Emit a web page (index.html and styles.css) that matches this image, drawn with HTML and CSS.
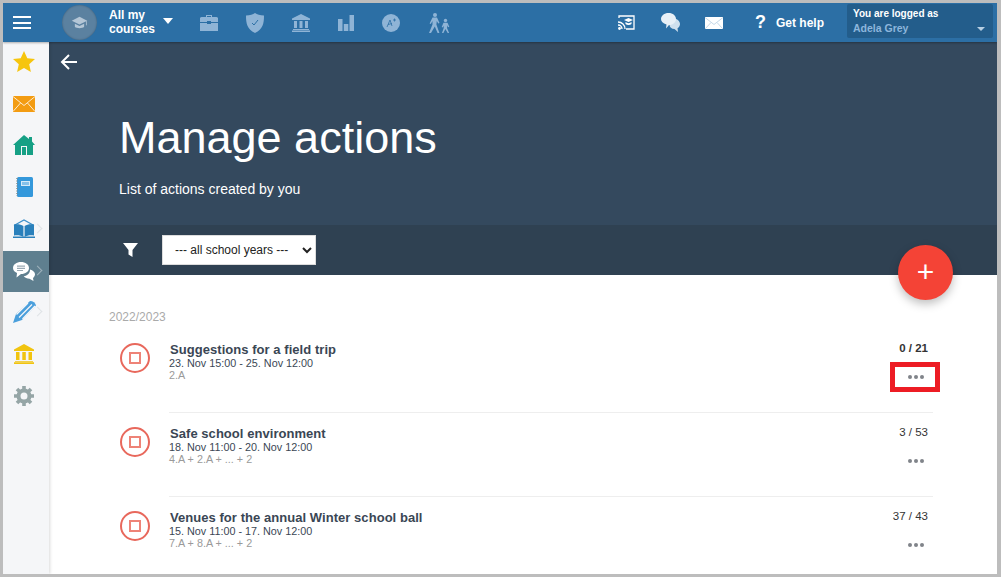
FILE: index.html
```html
<!DOCTYPE html>
<html lang="en">
<head>
<meta charset="utf-8">
<title>Manage actions</title>
<link rel="stylesheet" href="styles.css">
</head>
<body>
<div class="frame">
  <header class="topbar">
    <button class="burger" aria-label="Menu"><span></span><span></span><span></span></button>
    <div class="avatar">
      <svg width="17" height="14" viewBox="0 0 22 18"><path fill="#b4c6d6" d="M11 1 1 6l10 5 10-5z"/><path fill="#b4c6d6" d="M5 10v4c2 2.500 10 2.500 12 0v-4l-6 3z"/><path stroke="#b4c6d6" d="M20 6.500V12"/></svg>
    </div>
    <div class="courses">All my<br>courses</div>
    <span class="caret"></span>
    <nav class="topnav">
      <svg width="18" height="16" viewBox="0 0 18 16"><path fill="#8fb4d6" d="M6 0h6v2h4a2 2 0 0 1 2 1v4H11V6H7v1H0V3a2 2 0 0 1 2-1h4zm1 1v1h4V1zM0 8h7v1h4V8h7v8H0z"/></svg>
      <svg width="18" height="20" viewBox="0 0 18 20"><path fill="#8fb4d6" d="M9 0c2 1.500 5 2.500 9 2.500 0 8-1 13.500-9 17.500C1 16 0 10.500 0 2.500 4 2.500 7 1.500 9 0z"/><path fill="none" stroke="#2c6fa5" d="m6 10 2 2 4-5"/></svg>
      <svg width="18" height="18" viewBox="0 0 18 18"><path fill="#8fb4d6" d="M9 0l9 4.500V6H0V4.500zM2 7h3v7H2zm5.500 0h3v7h-3zM13 7h3v7h-3zM1 15h16v1H1zm-1 1.500h18V18H0z"/></svg>
      <svg width="16" height="16" viewBox="0 0 16 16"><path fill="#8fb4d6" d="M0 4h4.500v12H0zm5.800 5h4.500v7H5.800zm5.700-9H16v16h-4.500z"/></svg>
      <svg width="18" height="18" viewBox="0 0 18 18"><circle cx="9" cy="9" r="9" fill="#8fb4d6"/><path fill="none" stroke="#2c6fa5" stroke-width=".8" d="m5 13 3-7 2 6M6 10.500l4-1M11 6h3M12.500 4.500v3"/></svg>
      <svg width="22" height="20" viewBox="0 0 22 20"><g fill="#8fb4d6"><circle cx="7" cy="2" r="2"/><circle cx="17.500" cy="7.500" r="1.700"/><path d="M4.500 4.500h4.500l2.500 5.500-1.200.600L8.800 8l-.4 3.500 3 8.500H9.600L6.800 13.500 3 20H1l3.500-8.500V8L2.800 11l-1.200-.6z"/><path d="M15.500 9.800h4l1.800 4-1.200.5-1-2v3l2 4.700h-1.400L17.400 16l-2 4H14l1.700-5v-2.200l-1 1.700-1-.6z"/></g></svg>
    </nav>
    <div class="topright">
      <svg width="17" height="15" viewBox="0 0 17 15"><path fill="none" stroke="#fff" stroke-width="1.300" d="M1 3V1h15v13H8"/><path fill="#fff" d="M6 5l4.500-2L15 5l-4.500 2zM7.500 7c1.500 1.500 4.500 1.500 6 0v2c-1.500 1.200-4.500 1.200-6 0z"/><path fill="none" stroke="#fff" stroke-width="1.300" d="M0 7c4 0 7 3 7 7M0 10c2.500 0 4 1.800 4 4"/><circle cx="1.500" cy="13.500" r="1.400" fill="#fff"/></svg>
      <svg width="19" height="19" viewBox="0 0 19 19"><path fill="#cfe0ee" d="M13 5.500c3 .3 6 2.500 6 5.500 0 2-1 3.300-2.500 4.300l.500 3.700-3.500-3c-3 0-5-2-5-4z"/><path fill="#e8f0f7" d="M7.500 0C12 0 15 2.700 15 6s-3 6-7 6l-3 3.500.5-4C2 10.500 0 8.500 0 6c0-3.300 3.300-6 7.500-6z"/></svg>
      <svg width="18" height="12" viewBox="0 0 18 12"><path fill="#fff" d="M0 0h18v12H0z"/><path fill="none" stroke="#c5d8e8" d="m0 .500 9 7 9-7M0 12l6-6.500M18 12l-6-6.500"/></svg>
      <a class="help"><span class="help-mark">?</span>Get help</a>
      <div class="user">
        <div class="user-label">You are logged as</div>
        <div class="user-name">Adela Grey</div>
        <span class="user-caret"></span>
      </div>
    </div>
  </header>

  <div class="body-row">
    <aside class="sidebar">
      <div class="side-item"><svg width="22" height="21" viewBox="0 0 22 21"><path fill="#f6c50e" d="m11 0 3.300 7.200 7.700.800-5.800 5.200 1.700 7.800L11 17l-6.900 4 1.700-7.800L0 8l7.700-.8z"/></svg></div>
      <div class="side-item"><svg width="22" height="16" viewBox="0 0 22 16"><path fill="#f39c12" d="M0 0h22v16H0z"/><path fill="none" stroke="#fdebd0" d="m0 .500 11 9 11-9M0 15.500 7.500 7M22 15.500 14.500 7"/></svg></div>
      <div class="side-item"><svg width="22" height="20" viewBox="0 0 22 20"><path fill="#16a085" d="M11 0l5 4V2h3v4.500L22 10h-2v10H2V10H0z"/><path fill="#f5f6f8" d="M8 11h6v9h-1v-8H9v8H8z"/></svg></div>
      <div class="side-item"><svg width="17" height="20" viewBox="0 0 17 20"><rect x="1" width="16" height="20" rx="1.500" fill="#3498db"/><path fill="#d6eaf8" d="M5 4h9v5H5z"/><path fill="#3498db" d="M6 5.500h7v1H6zm0 1.700h7v.600H6z"/><path stroke="#7f8c8d" stroke-dasharray="1 1.500" stroke-width="1.500" d="M1 1v18"/></svg></div>
      <div class="side-item side-more"><svg width="22" height="20" viewBox="0 0 22 20"><path fill="none" stroke="#3d8fc9" stroke-width="1.200" d="M1 6.500 11 1l10 5.500"/><path fill="#2a80bb" d="M1 5.500c4-.5 7 0 9.400 1.500v11C8 16.500 5 16 1 16.500zm20 0c-4-.5-7 0-9.400 1.500v11c2.400-1.500 5.400-2 9.400-1.500z"/><path fill="#2a80bb" d="M0 17.500h22V19H0z"/></svg><span class="chev"></span></div>
      <div class="side-item side-more active"><svg width="22" height="19" viewBox="0 0 22 19"><path fill="#fff" d="M8 0c4.400 0 8 2.500 8 6s-3.600 6-8 6l-4.500 3.500L4 11C1.500 10 0 8.300 0 6c0-3.500 3.600-6 8-6z"/><path fill="#9aa9b3" d="M4 3.500h8v1.200H4zm0 2.300h8V7H4zm0 2.300h6v1H4z"/><path fill="#fff" d="M17 7.500c3 .8 5 2.700 5 4.800 0 1.500-.8 2.800-2 3.700l.500 3-4-2.300c-2.500 0-4.500-1-5.800-2.400 3.800-.5 6.500-3.300 6.300-6.800z"/></svg><span class="chev"></span></div>
      <div class="side-item side-more"><svg width="23" height="22" viewBox="0 0 23 22"><path fill="#4a9fdc" d="M17 0c3 0 5.500 2 6 4.500L9 19 0 22l3-9z"/><path fill="none" stroke="#f5f6f8" stroke-width="1.200" d="M19 3.500 6 16.500M22 5 9.500 18M15 2 3.500 13.500"/></svg><span class="chev"></span></div>
      <div class="side-item"><svg width="20" height="20" viewBox="0 0 20 20"><path fill="#f1c40f" d="M10 0l10 5.500V7H0V5.500zM2 8h3.500v8H2zm6.300 0h3.500v8H8.300zm6.200 0H18v8h-3.500zM1 17h18v.800H1zm-1 1.300h20V20H0z"/></svg></div>
      <div class="side-item"><svg width="20" height="20" viewBox="0 0 20 20"><circle cx="10" cy="10" r="5.500" fill="none" stroke="#95a5a6" stroke-width="4"/><path stroke="#95a5a6" stroke-width="3.600" d="M10 0v4M10 16v4M0 10h4M16 10h4M3 3l2.800 2.800M14.200 14.200 17 17M17 3l-2.800 2.800M5.800 14.200 3 17"/></svg></div>
    </aside>

    <main class="main">
      <section class="hero">
        <svg class="back" width="18" height="16" viewBox="0 0 18 16"><path fill="none" stroke="#fff" stroke-width="2" d="M17 8H2M9 1 2 8l7 7"/></svg>
        <h1>Manage actions</h1>
        <p>List of actions created by you</p>
      </section>
      <div class="filterbar">
        <svg width="15" height="14" viewBox="0 0 15 14"><path fill="#fff" d="M0 0h15L9.500 7v7l-4-2.500V7z"/></svg>
        <select class="year-select"><option>--- all school years ---</option></select>
      </div>
      <button class="fab">+</button>
      <section class="content">
        <div class="year">2022/2023</div>

        <article class="row">
          <div class="status"><span></span></div>
          <div class="row-main">
            <div class="info">
              <h2>Suggestions for a field trip</h2>
              <div class="date">23. Nov 15:00 - 25. Nov 12:00</div>
              <div class="classes">2.A</div>
            </div>
            <div class="side">
              <div class="count strong">0 / 21</div>
              <div class="more highlighted"><i></i><i></i><i></i></div>
            </div>
          </div>
        </article>

        <article class="row">
          <div class="status"><span></span></div>
          <div class="row-main">
            <div class="info">
              <h2>Safe school environment</h2>
              <div class="date">18. Nov 11:00 - 20. Nov 12:00</div>
              <div class="classes">4.A + 2.A + ... + 2</div>
            </div>
            <div class="side">
              <div class="count">3 / 53</div>
              <div class="more"><i></i><i></i><i></i></div>
            </div>
          </div>
        </article>

        <article class="row">
          <div class="status"><span></span></div>
          <div class="row-main">
            <div class="info">
              <h2>Venues for the annual Winter school ball</h2>
              <div class="date">15. Nov 11:00 - 17. Nov 12:00</div>
              <div class="classes">7.A + 8.A + ... + 2</div>
            </div>
            <div class="side">
              <div class="count">37 / 43</div>
              <div class="more"><i></i><i></i><i></i></div>
            </div>
          </div>
        </article>
      </section>
    </main>
  </div>
</div>
</body>
</html>
```

FILE: styles.css
```css
* { box-sizing: border-box; }
html, body { margin: 0; height: 100%; }
body {
  background: #bdbdbd;
  padding: 3px 4px 3px 3px;
  overflow: hidden;
  font-family: "Liberation Sans", Arial, sans-serif;
}
.frame {
  height: 571px;
  background: #fff;
  display: flex;
  flex-direction: column;
  overflow: hidden;
}

/* top bar */
.topbar {
  flex: 0 0 39px;
  background: #2c6fa5;
  display: flex;
  align-items: center;
  color: #fff;
  position: relative;
  z-index: 2;
  box-shadow: 0 1px 2px rgba(0, 0, 0, .3);
}
.burger {
  width: 18px;
  height: 13px;
  margin-left: 10px;
  padding: 0;
  background: none;
  border: 0;
  display: flex;
  flex-direction: column;
  justify-content: space-between;
}
.burger span { display: block; height: 2px; background: #fff; }
.avatar {
  width: 35px;
  height: 35px;
  margin-left: 31px;
  border-radius: 50%;
  background: #5b81a0;
  box-shadow: inset 0 0 2px rgba(0, 0, 0, .3);
  display: flex;
  align-items: center;
  justify-content: center;
}
.courses {
  margin: 0 0 2px 12px;
  font-size: 12px;
  line-height: 14px;
  font-weight: 700;
  width: 54px;
}
.caret {
  width: 0;
  height: 0;
  border: 5.500px solid transparent;
  border-top: 6px solid #fff;
  border-bottom: 0;
  margin-top: -4px;
}
.topnav {
  display: flex;
  align-items: center;
  margin-left: 27px;
  width: 250px;
  justify-content: space-between;
}
.topright {
  margin-left: auto;
  display: flex;
  align-items: center;
  height: 100%;
}
.topright > svg:nth-child(1) { margin-right: 26px; }
.topright > svg:nth-child(2) { margin-right: 25px; }
.topright > svg:nth-child(3) { margin-right: 27px; }
.help {
  display: flex;
  align-items: center;
  font-size: 12px;
  font-weight: 700;
  margin-left: 5px;
}
.help-mark { font-size: 18px; margin-right: 10px; }
.user {
  position: relative;
  width: 146px;
  height: 34px;
  margin: 0 4px 3px 23px;
  padding: 4px 6px;
  background: #235d8b;
  border-radius: 2px;
  font-weight: 700;
}
.user-label { font-size: 10px; line-height: 12px; }
.user-name { font-size: 10.500px; line-height: 16px; color: #8db6dc; }
.user-caret {
  position: absolute;
  right: 8px;
  top: 23px;
  border: 4px solid transparent;
  border-top: 4px solid #b7cfe3;
  border-bottom: 0;
}

/* layout */
.body-row { flex: 1; display: flex; min-height: 0; }
.sidebar {
  flex: 0 0 46px;
  margin-top: -1px;
  padding-right: 4px;
  background: #f5f6f8;
  box-shadow: 1px 0 3px rgba(0, 0, 0, .15);
  position: relative;
  z-index: 1;
}
.side-item {
  height: 41.750px;
  display: flex;
  align-items: center;
  justify-content: center;
  position: relative;
}
.chev {
  position: absolute;
  left: 31px;
  top: 50%;
  width: 7px;
  height: 7px;
  margin-top: -4px;
  border-top: 1.500px solid #dfe3e6;
  border-right: 1.500px solid #dfe3e6;
  transform: rotate(45deg);
}
.active {
  background: #5f7f8f;
  margin-right: -4px;
  padding-right: 4px;
  border-top: 1px solid #f5f6f8;
}
.active .chev { border-color: #9fb2bc; }

/* hero */
.main { flex: 1; position: relative; min-width: 0; overflow: hidden; }
.hero {
  height: 183px;
  background: #34495e;
  padding: 12px 70px 0;
  color: #fff;
}
.back { display: block; margin-left: -59px; }
.hero h1 {
  margin: 44px 0 0;
  font-size: 45px;
  line-height: 48px;
  font-weight: 400;
}
.hero p { margin: 19px 0 0; font-size: 14px; line-height: 16px; }
.filterbar {
  height: 50px;
  background: #2f4152;
  display: flex;
  align-items: center;
  gap: 24px;
  padding-left: 74px;
}
.year-select {
  width: 154px;
  height: 30px;
  padding-left: 8px;
  background: #fff;
  border: 1px solid #ddd;
  border-radius: 0;
  font: 12px "Liberation Sans", Arial, sans-serif;
  color: #222;
}
.fab {
  position: absolute;
  top: 203px;
  right: 44px;
  width: 55px;
  height: 55px;
  padding: 0 0 1px;
  border: 0;
  border-radius: 50%;
  background: #f44336;
  color: #fff;
  font: 400 30px/1 "Liberation Sans", Arial, sans-serif;
  box-shadow: 0 4px 10px rgba(0, 0, 0, .25);
}

/* list */
.content { padding: 35px 64px 0 60px; }
.year { font-size: 12px; line-height: 14px; color: #aaa; margin-bottom: 5px; }
.row { display: flex; margin-left: 11px; }
.status {
  flex: 0 0 30px;
  height: 30px;
  margin: 14px 19px 0 0;
  border: 2px solid #e8685c;
  border-radius: 50%;
  display: flex;
  align-items: center;
  justify-content: center;
}
.status span { width: 12px; height: 12px; border: 2px solid #ee8377; }
.row-main {
  flex: 1;
  height: 84px;
  border-bottom: 1px solid #eee;
  display: flex;
  justify-content: space-between;
}
.row:last-child .row-main { border-bottom: 0; }
.info { padding-top: 13px; color: #3a4654; }
.info h2 {
  margin: 0 0 0 1px;
  font-size: 13px;
  line-height: 15px;
  font-weight: 700;
  letter-spacing: .05px;
}
.date { font-size: 10.800px; line-height: 12px; }
.classes { font-size: 10.800px; line-height: 12px; color: #9a9a9a; }
.side {
  width: 50px;
  margin-right: -7px;
  display: flex;
  flex-direction: column;
  align-items: flex-end;
  padding-top: 13px;
  position: relative;
}
.count {
  font-size: 11.500px;
  line-height: 13px;
  color: #333;
  padding-right: 12px;
  white-space: nowrap;
}
.count.strong { font-weight: 700; }
.more {
  width: 50px;
  height: 30px;
  margin-top: 7px;
  padding: 0 0 1px 1px;
  display: flex;
  align-items: center;
  justify-content: center;
  gap: 2px;
}
.more i { width: 4px; height: 4px; border-radius: 50%; background: #80848a; }
.highlighted { border: 5px solid #ed1c24; }
```
